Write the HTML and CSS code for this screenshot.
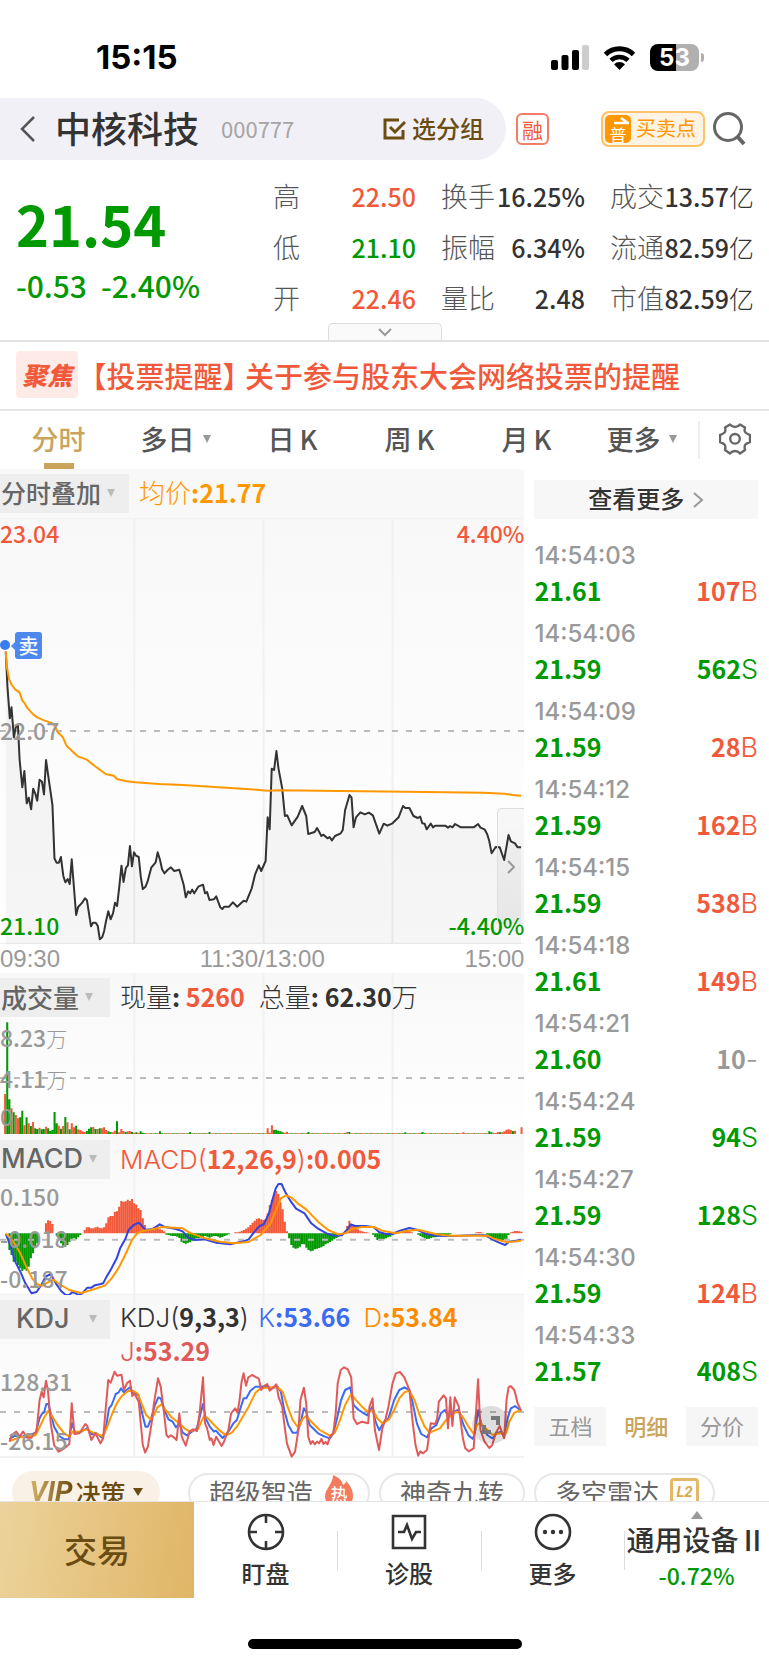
FILE: index.html
```html
<!DOCTYPE html>
<html lang="zh-CN">
<head>
<meta charset="utf-8">
<meta name="viewport" content="width=device-width, initial-scale=1">
<title>中核科技 000777</title>
<link rel="stylesheet" href="styles.css">
</head>
<body>
<header class="status">
  <time class="clock">15:15</time>
  <div class="status-icons">
    <svg width="38" height="25" viewBox="0 0 38 25"><rect x="0" y="15" width="7" height="10" rx="2"/><rect x="10.500" y="10" width="7" height="15" rx="2"/><rect x="21" y="5" width="7" height="20" rx="2"/><rect x="31" y="0" width="7" height="25" rx="2" fill="#cdcdcd"/></svg>
    <svg width="33" height="25" viewBox="0 0 33 25"><path d="M2.500 9.500A20 20 0 0 1 30.500 9.500" fill="none" stroke="#000" stroke-width="5"/><path d="M8 15.300A12.400 12.400 0 0 1 25 15.300" fill="none" stroke="#000" stroke-width="4.600"/><path d="M16.500 25 11 19.300a8 8 0 0 1 11 0Z"/></svg>
    <div class="battery"><span>53</span></div>
  </div>
</header>

<div class="titlebar">
  <div class="title-pill">
    <button class="plain back" aria-label="返回"><svg width="16" height="26" viewBox="0 0 16 26"><path d="M14 1 2 13l12 12" fill="none" stroke="#555" stroke-width="2.500"/></svg></button>
    <h1>中核科技</h1>
    <span class="code">000777</span>
    <button class="plain group"><svg width="23" height="22" viewBox="0 0 23 22"><path d="M16 2H2v18h18v-8" fill="none" stroke="#6b4d12" stroke-width="3"/><path d="m7 9 5 5L22 4" fill="none" stroke="#6b4d12" stroke-width="3"/></svg><span>选分组</span></button>
  </div>
  <span class="margin-tag">融</span>
  <button class="plain trade-points"><span class="pu"><svg width="24" height="9" viewBox="0 0 24 9"><path d="M9 6h14l-7-5" fill="none" stroke="#fff" stroke-width="2.500"/></svg>普</span><span>买卖点</span></button>
  <button class="plain search" aria-label="搜索"><svg width="33" height="34" viewBox="0 0 33 34"><circle cx="15" cy="15" r="13.500" fill="none" stroke="#666" stroke-width="3"/><path d="m24 24 7 8" stroke="#666" stroke-width="4"/></svg></button>
</div>

<section class="quote">
  <div class="price down"><strong>21.54</strong><p><span>-0.53</span><span>-2.40%</span></p></div>
  <dl class="stats">
    <div><dt>高</dt><dd class="up">22.50</dd></div><div><dt>换手</dt><dd>16.25%</dd></div><div><dt>成交</dt><dd>13.57<i>亿</i></dd></div>
    <div><dt>低</dt><dd class="down">21.10</dd></div><div><dt>振幅</dt><dd>6.34%</dd></div><div><dt>流通</dt><dd>82.59<i>亿</i></dd></div>
    <div><dt>开</dt><dd class="up">22.46</dd></div><div><dt>量比</dt><dd>2.48</dd></div><div><dt>市值</dt><dd>82.59<i>亿</i></dd></div>
  </dl>
  <button class="expand" aria-label="展开"><svg width="14" height="9" viewBox="0 0 14 9"><path d="m1 1 6 6 6-6" fill="none" stroke="#999" stroke-width="2"/></svg></button>
</section>

<a class="notice" href="#"><span class="focus">聚焦</span><span class="brackets">【投票提醒】</span><span>关于参与股东大会网络投票的提醒</span></a>

<nav class="tabs">
  <button class="plain active">分时</button><button class="plain">多日<i class="tri"></i></button><button class="plain k-tab">日<span>K</span></button><button class="plain k-tab">周<span>K</span></button><button class="plain k-tab">月<span>K</span></button><button class="plain">更多<i class="tri"></i></button>
  <button class="plain gear" aria-label="设置"><svg width="32" height="32" viewBox="0 0 32 32" fill="none" stroke="#666" stroke-width="2.400" stroke-linejoin="round"><path d="M11 1.500Q13 4 16 4T21 1.500L26 4.500Q25 8 26.500 9.500T31 12V19Q28 20 26.500 21.500T26 27L21 30.500Q19 28 16 28T11 30.500L6 27Q7 23 5.500 21.500T1 19V12Q4 11 5.500 9.500T6 4.500Z"/><circle cx="16" cy="15.800" r="4.800"/></svg></button>
</nav>

<main class="board">
  <div class="charts">
    <section class="panel">
      <div class="panel-head main-head"><button class="picker wide">分时叠加<i class="tri"></i></button><p class="reading orange">均价<b>:21.77</b></p></div>
      <div class="plot plot-main">
        <svg viewBox="0 0 1550 1278" preserveAspectRatio="none">
          <path class="grid" d="M0 1H1550M397 0V1278M779 0V1278M1160 0V1278M0 1277H1550"/>
          <g transform="translate(0 546)">
            <path class="area" id="area"/>
            <path class="dash" d="M0 93H1550"/>
            <polyline class="ink" id="price" points="17,-145 22,-40 29,55 34,22 41,112 47,80 53,75 58,180 66,262 72,213 79,310 85,293 92,328 98,266 104,280 110,302 117,239 124,245 130,283 136,180 145,245 155,315 161,475 167,488 174,488 180,471 187,527 193,547 200,537 206,552 212,478 225,645 231,621 243,608 251,595 257,601 269,679 275,668 283,668 289,678 295,718 302,712 308,692 313,665 320,634 327,658 334,640 340,608 346,618 352,565 359,497 365,546 372,504 378,496 384,438 390,499 396,457 402,467 410,471 416,530 422,567 430,560 436,545 447,503 460,487 466,457 473,480 479,508 486,520 495,510 505,502 515,513 530,509 543,555 549,592 556,574 562,580 568,569 574,580 586,560 600,554 606,580 612,576 619,600 632,598 639,589 651,622 657,627 663,620 677,620 688,607 701,620 720,602 728,605 744,565 754,523 765,496 772,513 785,483 791,352 797,388 803,206 810,210 817,153 823,205 834,265 842,348 849,346 862,376 880,350 893,318 905,348 911,402 930,396 937,384 950,408 956,404 968,415 974,411 981,421 990,408 1007,400 1013,390 1020,330 1033,285 1039,293 1045,382 1052,352 1065,337 1078,343 1090,338 1102,346 1121,401 1134,371 1145,377 1160,370 1178,352 1191,318 1198,324 1210,324 1222,348 1235,354 1242,350 1248,370 1255,371 1261,388 1273,371 1280,382 1286,377 1316,377 1324,383 1330,378 1337,382 1345,372 1362,382 1400,382 1413,372 1420,383 1432,388 1440,403 1446,423 1453,460 1465,441 1477,442 1490,480 1503,405 1510,424 1522,430 1530,442 1540,442"/>
          </g>
          <polyline class="amber" transform="translate(0 -24)" points="17,425 20,470 27,508 35,525 45,538 58,548 66,572 73,580 80,593 98,613 110,622 130,631 148,637 158,642 172,668 186,682 197,708 212,722 230,739 255,748 280,768 312,792 336,797 346,807 370,813 400,817 470,822 540,825 600,829 680,834 740,838 790,842 830,841 1000,843 1200,845 1430,848 1490,851 1515,855 1540,857"/>
        </svg>
        <span class="mark up tl">23.04</span><span class="mark up tr">4.40%</span>
        <span class="mark grey mid">22.07</span>
        <span class="mark down bl">21.10</span><span class="mark down br">-4.40%</span>
        <span class="dot"></span><span class="sell">卖</span>
        <button class="handle" aria-label="收起"><svg width="8" height="14" viewBox="0 0 8 14"><path d="m1 1 6 6-6 6" fill="none" stroke="#999" stroke-width="2"/></svg></button>
      </div>
      <div class="axis"><span>09:30</span><span>11:30/13:00</span><span>15:00</span></div>
    </section>

    <section class="panel shaded volume">
      <svg class="fill" viewBox="0 0 1550 486" preserveAspectRatio="none"><path class="grid" d="M397 0V486M779 0V486M1160 0V486"/><path class="bar-up" id="vol-up"/><path class="bar-down" id="vol-down"/><path class="dash" d="M0 315H1550"/></svg>
      <div class="panel-head"><button class="picker">成交量<i class="tri"></i></button><p class="reading ink-text">现量<b>: </b><b class="up">5260</b><span class="next">总量<b>: 62.30</b>万</span></p></div>
      <span class="mark grey v1">8.23<i>万</i></span><span class="mark grey v2">4.11<i>万</i></span><span class="mark grey v3">0</span>
    </section>

    <section class="panel shaded macd">
      <svg class="fill" viewBox="0 0 1550 480" preserveAspectRatio="none"><path class="grid" d="M397 0V480M779 0V480M1160 0V480M0 479H1550"/><path class="bar-up" id="macd-up"/><path class="bar-down" id="macd-down"/><path class="dash" d="M0 314H1550"/>
        <g transform="translate(0 -15)"><polyline class="blue" points="17,312 30,345 45,395 60,425 75,460 93,490 108,486 122,465 135,440 150,432 165,460 180,482 193,494 205,495 212,487 222,489 232,495 243,490 258,473 270,473 280,466 295,463 305,460 315,440 328,418 345,385 355,355 370,328 380,300 395,285 410,278 418,286 430,300 450,297 462,290 472,283 485,290 520,297 540,304 555,322 575,330 605,328 640,338 680,343 720,334 735,328 750,308 765,290 780,282 795,250 805,210 815,175 823,162 832,162 845,190 860,215 875,236 900,250 920,280 940,296 965,310 985,317 1010,316 1025,300 1037,283 1050,288 1080,288 1105,292 1120,306 1140,312 1160,312 1180,303 1210,294 1235,300 1260,312 1290,317 1340,318 1400,316 1435,316 1455,328 1475,338 1493,345 1505,335 1540,330"/>
        <polyline class="amber" points="17,310 40,335 60,370 80,415 95,445 110,463 125,467 140,458 158,449 175,462 205,480 240,489 270,480 310,467 330,445 350,415 370,375 390,330 405,310 420,303 440,300 480,291 540,295 560,308 600,323 650,335 690,340 735,336 770,315 800,280 820,230 830,205 845,196 860,202 880,220 905,238 940,275 970,300 1000,313 1020,310 1040,297 1070,291 1105,291 1130,302 1170,310 1200,303 1235,299 1260,305 1290,313 1330,317 1400,317 1440,317 1465,328 1500,337 1540,332"/></g></svg>
      <div class="panel-head"><button class="picker latin">MACD<i class="tri"></i></button><p class="reading up">MACD(<b>12,26,9</b>)<b>:0.005</b></p></div>
      <span class="mark grey m1">0.150</span><span class="mark grey m2">-0.018</span><span class="mark grey m3">-0.187</span>
    </section>

    <section class="panel shaded kdj">
      <svg class="fill" viewBox="0 0 1550 489" preserveAspectRatio="none"><path class="grid" d="M397 0V489M779 0V489M1160 0V489M0 487H1550"/><path class="dash" d="M0 351H1550"/>
        <g transform="translate(0 -15)"><polyline class="kblue" points="28,447 45,437 60,441 80,436 105,430 117,385 125,370 130,368 137,342 143,342 150,370 160,410 175,438 190,448 203,448 213,400 222,428 240,425 257,415 272,433 285,430 302,443 312,420 322,355 330,345 342,312 350,308 358,295 366,307 384,292 392,310 400,310 410,318 420,370 430,410 437,410 447,385 458,345 468,322 475,325 488,365 498,388 510,395 520,412 530,400 540,428 552,436 567,425 582,415 600,342 608,385 620,410 632,425 638,422 658,444 675,425 690,400 700,390 712,350 720,325 728,325 740,302 755,290 770,290 790,288 800,295 820,290 830,305 840,360 852,405 865,428 878,428 888,400 898,355 905,365 915,405 925,415 940,430 960,440 975,445 985,430 995,390 1008,330 1020,300 1035,292 1045,345 1060,360 1085,376 1100,350 1110,395 1121,421 1135,395 1148,385 1165,330 1180,300 1195,292 1210,300 1220,340 1232,400 1245,432 1262,442 1275,415 1290,405 1303,370 1315,360 1325,380 1340,365 1355,360 1370,405 1385,437 1398,447 1405,420 1413,360 1422,400 1440,435 1455,445 1468,430 1480,425 1490,440 1500,385 1510,355 1522,348 1540,362"/>
        <polyline class="amber" points="28,453 60,442 105,436 120,405 132,380 143,362 155,380 170,405 190,430 205,440 215,425 235,425 257,418 275,428 303,438 315,415 330,375 345,340 360,318 380,302 395,303 408,312 420,345 432,375 445,388 455,375 465,352 477,343 490,360 505,380 530,400 545,415 560,424 585,418 595,395 603,378 615,385 630,402 650,422 668,436 685,428 700,410 715,385 735,350 755,308 770,295 820,291 835,305 850,350 865,390 882,414 895,385 905,378 920,395 945,420 975,437 990,428 1005,390 1020,345 1038,312 1050,328 1070,350 1090,368 1102,360 1115,385 1130,400 1150,388 1165,360 1180,325 1195,307 1210,302 1225,330 1240,375 1255,410 1270,428 1300,415 1320,388 1345,367 1357,366 1370,385 1385,410 1400,432 1410,405 1420,398 1435,415 1455,434 1480,430 1495,430 1505,395 1520,368 1540,360"/>
        <polyline class="rose" points="28,455 35,435 48,425 58,440 68,425 80,443 93,443 100,430 108,425 117,330 123,305 129,322 136,272 142,305 150,400 160,465 173,485 190,475 205,462 212,340 220,432 235,430 252,402 258,408 270,450 282,430 297,460 305,445 312,360 320,270 327,278 339,245 346,257 359,254 366,300 375,280 384,272 391,318 397,310 410,335 416,400 422,465 429,488 437,470 448,400 455,340 467,265 475,290 485,370 492,435 498,442 505,436 515,443 522,450 530,370 537,440 549,467 560,425 570,418 582,423 590,370 600,262 606,400 612,415 620,450 625,445 631,465 639,440 655,468 662,455 675,420 683,370 695,355 702,368 708,330 714,275 720,250 727,287 734,262 745,255 765,266 772,300 782,287 790,282 797,302 810,290 817,283 823,320 834,350 840,400 848,460 862,500 872,485 882,420 888,330 898,293 905,340 911,440 918,462 924,453 930,463 937,455 943,460 950,447 956,462 962,456 968,463 975,440 985,430 992,370 998,280 1007,240 1017,232 1028,238 1038,262 1045,385 1055,402 1070,395 1088,400 1092,350 1101,325 1108,420 1120,480 1130,415 1140,385 1148,350 1160,280 1170,250 1182,246 1195,262 1210,300 1220,400 1228,465 1236,497 1242,484 1250,490 1262,480 1273,400 1286,402 1292,385 1297,335 1311,316 1318,325 1324,415 1331,322 1337,408 1344,322 1356,350 1368,445 1375,475 1385,484 1400,475 1413,268 1420,420 1432,455 1446,474 1455,465 1465,430 1477,408 1490,445 1497,330 1503,292 1509,288 1520,300 1530,340 1540,362"/></g></svg>
      <div class="panel-head"><button class="picker latin centered">KDJ<i class="tri"></i></button><p class="reading two-line"><span class="ink-text">KDJ(<b>9,3,3</b>)</span> <span class="k">K<b>:53.66</b></span> <span class="d">D<b>:53.84</b></span> <span class="j">J<b>:53.29</b></span></p></div>
      <span class="mark grey k1">128.31</span><span class="mark grey k2">-26.15</span>
      <button class="rotate" aria-label="全屏"><svg width="18" height="18" viewBox="0 0 18 18"><path d="M9 2h7v7M2 9v7h7" fill="none" stroke="#777" stroke-width="4"/></svg></button>
    </section>
  </div>

  <aside class="ticks">
    <button class="see-more"><span>查看更多</span><svg width="11" height="16" viewBox="0 0 11 16"><path d="m1 1 8 7-8 7" fill="none" stroke="#999" stroke-width="2"/></svg></button>
    <ul>
      <li><time>14:54:03</time><b class="down">21.61</b><span class="up"><b>107</b>B</span></li>
      <li><time>14:54:06</time><b class="down">21.59</b><span class="down"><b>562</b>S</span></li>
      <li><time>14:54:09</time><b class="down">21.59</b><span class="up"><b>28</b>B</span></li>
      <li><time>14:54:12</time><b class="down">21.59</b><span class="up"><b>162</b>B</span></li>
      <li><time>14:54:15</time><b class="down">21.59</b><span class="up"><b>538</b>B</span></li>
      <li><time>14:54:18</time><b class="down">21.61</b><span class="up"><b>149</b>B</span></li>
      <li><time>14:54:21</time><b class="down">21.60</b><span class="flat"><b>10</b>-</span></li>
      <li><time>14:54:24</time><b class="down">21.59</b><span class="down"><b>94</b>S</span></li>
      <li><time>14:54:27</time><b class="down">21.59</b><span class="down"><b>128</b>S</span></li>
      <li><time>14:54:30</time><b class="down">21.59</b><span class="up"><b>124</b>B</span></li>
      <li><time>14:54:33</time><b class="down">21.57</b><span class="down"><b>408</b>S</span></li>
    </ul>
    <div class="tick-tabs"><button>五档</button><button class="active">明细</button><button>分价</button></div>
  </aside>
</main>

<div class="chips">
  <button class="vip"><em>VIP</em>决策<i class="tri"></i></button>
  <div class="chip-row">
    <button>超级智造<span class="hot"><svg width="30" height="34" viewBox="0 0 30 34"><path d="M9 0c8 3 9 7 10 10 2-1 3-3 3-4 5 5 7 10 7 15 0 8-6 13-14 13S1 29 1 21C1 14 9 9 9 0Z" fill="#f47b5e"/></svg><span>热</span></span></button>
    <button>神奇九转</button>
    <button>多空雷达<span class="l2"><span>L2</span></span></button>
  </div>
</div>

<footer class="actions">
  <button class="trade"><span>交易</span></button>
  <button><svg width="38" height="38" viewBox="0 0 38 38" fill="none" stroke="#333" stroke-width="2.600"><circle cx="19" cy="19" r="17"/><path d="M19 2v8M19 28v8M2 19h8M28 19h8"/></svg>盯盘</button>
  <button><svg width="38" height="38" viewBox="0 0 38 38" fill="none" stroke="#333" stroke-width="2.600"><path d="M3 3h32v32H3ZM8 19h6l3-7 5 14 4-7h5"/></svg>诊股</button>
  <button><svg width="38" height="38" viewBox="0 0 38 38" fill="none" stroke="#333" stroke-width="2.600"><circle cx="19" cy="19" r="17"/><g fill="#333" stroke="none"><circle cx="11" cy="19" r="2.200"/><circle cx="19" cy="19" r="2.200"/><circle cx="27" cy="19" r="2.200"/></g></svg>更多</button>
  <button class="sector"><i class="caret"></i><span>通用设备Ⅱ</span><b class="down">-0.72%</b></button>
</footer>
<div class="home"><span></span></div>
<script src="app.js"></script>
</body>
</html>
```

FILE: styles.css
```css
:root {
  --num: "Noto Sans CJK SC", Roboto, sans-serif;
  --cjk: "Noto Sans CJK SC", sans-serif;
  --up: #f2593a;
  --down: #009900;
  --grey: #999;
}
* { box-sizing: border-box; }
body, h1, p, dl, dd, ul { margin: 0; padding: 0; }
body { background: #fff; color: #333; font-family: Roboto, var(--cjk); overflow-x: hidden; }
button { border: 0; padding: 0; background: none; color: inherit; font: inherit; }
svg { display: block; }
i { font-style: normal; font-weight: 400; }
ul { list-style: none; }
.plain { display: flex; align-items: center; }
.up { color: var(--up); }
.down { color: var(--down); }
.flat, .grey { color: var(--grey); }
.ink-text { color: #333; }
.tri { width: 0; height: 0; border: 4px solid transparent; border-top: 8px solid #999; border-bottom: 0; }

.status { height: 98px; display: flex; justify-content: space-between; padding: 37px 70px 0 96px; color: #000; }
.clock { font: 700 33px/40px Inter, sans-serif; }
.status-icons { display: flex; gap: 14px; height: 40px; align-items: center; }
.battery { position: relative; width: 49px; height: 27px; border-radius: 8px; background: linear-gradient(90deg, #000 54%, #b0b0b0 54%); color: #fff; text-align: center; font: 700 24px/27px Inter, sans-serif; }
.battery::after { content: ""; position: absolute; left: 51px; top: 9px; width: 3px; height: 9px; border-radius: 0 3px 3px 0; background: #b0b0b0; }

.titlebar { display: flex; align-items: center; height: 62px; padding-right: 23px; }
.title-pill { flex: 0 1 506px; height: 62px; display: flex; align-items: center; padding: 0 22px 0 20px; border-radius: 0 31px 31px 0; background: #f1f0f6; }
.title-pill h1 { margin-left: 19px; padding-bottom: 4px; font: 500 36px/50px var(--cjk); white-space: nowrap; }
.code { margin-left: 22px; padding-bottom: 2px; font: 400 22px/36px var(--num); color: #a5a5a5; }
.group { margin-left: auto; gap: 6px; font: 500 24px/36px var(--cjk); color: #6b4d12; }
.group span, .trade-points > span:last-child, .see-more span, .trade span { padding-bottom: 3px; }
.margin-tag { margin-left: 10px; padding: 0 4px; border: 2px solid #f47b66; border-radius: 6px; font: 400 21px/28px var(--cjk); color: var(--up); }
.trade-points { margin-left: auto; gap: 5px; height: 36px; padding: 0 7px 0 2px; border: 2px solid #ffc266; border-radius: 8px; background: #fff3e3; font: 400 20px/30px var(--cjk); color: #ff9800; }
.pu { width: 26px; height: 28px; padding-top: 2px; border-radius: 5px; background: #ff9800; color: #fff; font: 400 17px/17px var(--cjk); text-align: center; }
.search { margin-left: 8px; }

.quote { position: relative; display: flex; height: 182px; padding: 12px 15px 0 16px; border-bottom: 2px solid #e2e2e2; }
.price { flex: none; width: 257px; padding-top: 17px; font-family: var(--num); }
.price strong { display: block; font-size: 56px; line-height: 68px; font-weight: 700; }
.price p { display: flex; gap: 14px; margin-top: 8px; font-size: 30px; line-height: 40px; font-weight: 500; }
.stats { flex: 1; display: grid; grid-template-columns: 143px 144px 1fr; column-gap: 25px; grid-auto-rows: 51px; }
.stats div { display: flex; justify-content: space-between; align-items: center; padding-bottom: 3px; white-space: nowrap; }
.stats dt { font: 300 27px/40px var(--cjk); color: #555; }
.stats dd { font: 500 25px/40px var(--num); }
.stats dd i { font: 300 25px/40px var(--cjk); }
.expand { position: absolute; left: 50%; bottom: 0; width: 114px; height: 17px; margin-left: -57px; display: grid; place-items: center; border: 1px solid #ddd; border-bottom: 0; border-radius: 5px 5px 0 0; background: #fafafa; }

.notice { display: flex; align-items: center; height: 69px; padding: 0 0 2px 16px; border-bottom: 2px solid #e5e5e5; color: var(--up); text-decoration: none; font: 500 29px/40px var(--cjk); white-space: nowrap; }
.focus { width: 62px; margin-right: 14px; border-radius: 4px; background: #feebe7; font: italic 900 25px/47px var(--cjk); text-align: center; }
.brackets { margin-right: 8px; font-feature-settings: "halt"; }

.tabs { display: grid; grid-template-columns: repeat(5, 117px) 1fr 71px; height: 58px; font: 500 27px/40px var(--cjk); color: #555; }
.tabs button { position: relative; justify-content: center; gap: 8px; padding-bottom: 2px; }
.tabs .k-tab { gap: 5px; }
.tabs .active { color: #caa35c; }
.tabs .active::after { content: ""; position: absolute; left: 50%; bottom: 0; width: 30px; height: 6px; margin-left: -15px; background: #caa35c; }
.tabs .gear { margin: 10px 0; border-left: 2px solid #eee; }

.board { display: flex; align-items: stretch; }
.charts { flex: 0 0 68.2%; }
.panel { position: relative; }
.panel-head { position: relative; display: flex; padding-top: 5px; gap: 10px; }
.main-head { height: 49px; background: #f8f8f8; }
.picker { flex: none; width: 110px; height: 39px; display: flex; align-items: center; gap: 6px; padding: 0 0 2px 1px; background: #eee; color: #666; font: 500 26px/37px var(--cjk); white-space: nowrap; }
.picker .tri { border-top-color: #bbb; }
.picker.wide { width: 129px; font-size: 25px; }
.picker.latin { font: 500 27px/37px Inter, sans-serif; }
.picker.centered { padding-left: 16px; gap: 19px; }
.reading { font: 300 26px/37px Inter, var(--cjk); white-space: nowrap; }
.reading b { font: 700 25px/37px var(--num); white-space: pre; }
.reading .next { margin-left: 14px; }
.orange { color: #ff9800; }
.plot { position: relative; }
.plot-main { height: 426px; background: linear-gradient(#f8f8f8, #fff); }
.plot-main > svg, .fill { position: absolute; inset: 0; width: 100%; height: 100%; overflow: hidden; }
.plot path, .plot polyline, .fill path, .fill polyline { vector-effect: non-scaling-stroke; fill: none; stroke-width: 2; stroke-linejoin: round; }
.panel svg .grid { stroke: #f1f1f1; }
.panel svg .dash { stroke: #bbb; stroke-dasharray: 6 8; }
.panel svg .area { fill: rgba(0, 0, 0, 0.035); stroke: none; }
.panel svg .ink { stroke: #333; }
.panel svg .amber { stroke: #ff9800; }
.panel svg .blue { stroke: #3344dd; }
.panel svg .kblue { stroke: #3b6bf0; }
.panel svg .rose { stroke: #e05a5a; }
.panel svg .bar-up { fill: #f2593a; stroke: none; }
.panel svg .bar-down { fill: #009900; stroke: none; }
.mark { position: absolute; left: 0; font: 500 23px/30px var(--num); }
.mark i { font: 300 21px/30px var(--cjk); }
.tl { top: 0; }
.tr { top: 0; left: auto; right: 0; }
.mid { top: 197px; }
.bl { bottom: 4px; }
.br { bottom: 4px; left: auto; right: 0; }
.dot { position: absolute; left: 0; top: 122px; width: 10px; height: 10px; border-radius: 50%; background: #3a7df0; }
.sell { position: absolute; left: 15px; top: 114px; width: 27px; border-radius: 3px; background: #4d88ee; color: #fff; font: 500 20px/27px var(--cjk); text-align: center; }
.sell::before { content: ""; position: absolute; left: -4px; top: 10px; border: 4px solid transparent; border-right-color: #4d88ee; border-left: 0; }
.handle { position: absolute; right: 0; bottom: 20px; width: 27px; height: 116px; display: grid; place-items: center; border: 1px solid #ddd; border-right: 0; border-bottom: 0; border-radius: 5px 0 0 0; background: linear-gradient(rgba(0, 0, 0, 0.02), rgba(0, 0, 0, 0.06)); }
.axis { display: flex; justify-content: space-between; height: 29px; font: 400 24px/29px "Liberation Sans", sans-serif; color: #999; }
.shaded { background: linear-gradient(#f8f8f8, #fff); }
.volume { height: 162px; }
.macd { height: 160px; }
.kdj { height: 163px; }
.v1 { top: 49px; }
.v2 { top: 90px; }
.v3 { top: 128px; }
.m1 { top: 46px; }
.m2 { top: 88px; }
.m3 { top: 128px; }
.k1 { top: 71px; }
.k2 { top: 130px; }
.two-line { flex: 1; }
.two-line, .two-line b { line-height: 32px; }
.two-line .k { margin: 0 6px 0 2px; color: #3b6bf0; }
.two-line .d { color: #ff8c00; }
.two-line .j { display: block; color: #e05a5a; }
.rotate { position: absolute; right: 14px; bottom: 14px; width: 38px; height: 38px; display: grid; place-items: center; border-radius: 50%; background: rgba(0, 0, 0, 0.12); }

.ticks { flex: 1; padding: 11px 11px 0 10px; display: flex; flex-direction: column; }
.see-more { height: 39px; display: flex; align-items: center; justify-content: center; gap: 9px; background: #f7f7f7; font: 500 24px/36px var(--cjk); }
.ticks ul { margin-top: 19px; }
.ticks li { display: flex; flex-wrap: wrap; justify-content: space-between; align-content: flex-start; height: 78px; }
.ticks li time { flex: 0 0 100%; font: 500 24px/36px Inter, sans-serif; color: #999; }
.ticks li b { font: 700 25px/32px var(--num); }
.ticks li span { font: 300 27px/32px Inter, sans-serif; }
.tick-tabs { display: grid; grid-template-columns: 72px 1fr 72px; margin-top: 11px; font: 400 22px/36px var(--cjk); color: #999; }
.tick-tabs button { height: 39px; padding-bottom: 3px; background: #f6f6f6; }
.tick-tabs .active { background: none; color: #caa35c; font-weight: 500; }

.chips { display: flex; gap: 28px; height: 43px; padding: 13px 0 0 12px; overflow: hidden; }
.vip { flex: none; width: 148px; height: 42px; display: flex; align-items: center; justify-content: center; border-radius: 21px; background: #f9f1e5; color: #6b4d12; font: 500 25px/38px var(--cjk); }
.vip em { margin-right: 3px; font: italic 700 28px/38px Roboto, sans-serif; background: linear-gradient(90deg, #d9b36a, #6b4d12); -webkit-background-clip: text; background-clip: text; color: transparent; }
.vip .tri { margin-left: 7px; border-width: 8px 5px 0; border-top-color: #6b4d12; }
.chip-row { display: flex; gap: 9px; padding-top: 2px; }
.chip-row button { height: 40px; display: flex; align-items: center; gap: 11px; padding: 0 19px 3px; border: 2px solid #e8e8e8; border-radius: 20px; color: #666; font: 400 26px/33px var(--cjk); white-space: nowrap; }
.chip-row button:first-child, .chip-row button:last-child { padding-right: 14px; }
.hot { position: relative; }
.hot span { position: absolute; inset: 8px 0 0; color: #fff; font: 500 17px/22px var(--cjk); text-align: center; }
.l2 { width: 29px; height: 28px; border: 3px solid #e3b866; border-radius: 4px; font: italic 700 15px/22px Roboto, sans-serif; color: #d9a94f; text-align: center; }

.actions { position: relative; display: grid; grid-template-columns: 194px 143px 144px 143px 1fr; height: 97px; background: #fff; border-top: 1px solid #e5e5e5; font: 500 24px/34px var(--cjk); }
.actions button { position: relative; display: flex; flex-direction: column; align-items: center; gap: 5px; padding-top: 11px; white-space: nowrap; }
.actions button + button + button::before { content: ""; position: absolute; left: 0; top: 29px; width: 1px; height: 39px; background: #ddd; }
.actions .trade { justify-content: center; padding: 0; background: linear-gradient(100deg, #ecd39b, #e0b566); color: #6b4d12; font-size: 33px; }
.actions .sector { gap: 0; padding-top: 9px; }
.caret { border: 6px solid transparent; border-bottom: 8px solid #999; border-top: 0; }
.sector span { font-size: 28px; line-height: 40px; }
.sector b { font: 500 23px/32px var(--num); }
.home { padding: 41px 0 16px; }
.home span { display: block; width: 274px; height: 10px; margin: 0 auto; border-radius: 5px; background: #000; }
```

FILE: app.js
```js
// Positive values are rising bars, negative values falling ones.
var STEP = 6.36;
var START = 12;

function spread(segments) {
  var out = new Array(241).fill(0);
  Object.keys(segments).forEach(function (at) {
    segments[at].forEach(function (v, i) { out[+at + i] = v; });
  });
  return out;
}

function bars(values, base, width, signed, sign) {
  return values.map(function (v, i) {
    if (v * sign <= 0) return "";
    var x = START + i * STEP;
    var tip = signed ? base - v : base - Math.abs(v);
    return "M" + x + " " + base + "V" + tip + "h" + width + "V" + base + "Z";
  }).join("");
}

var volume = spread({
  0: [120, -335, -104, 77, -65, 57, 47, -50, -70, 26, -50, 32, -24, 36, -17, -15, 19, -14, -15, 22, -17, -9, -13, -66, -32, 25, -16, 24, -51, 35, -14, 32, 20, -25, 14, 12, 8, 6, -9, -16, -20, 21, -15, 15, -17, 17, 20, 12, -8, -6, 5, 10, -38, 5, 15, 9, -6, 8, 9, -6, 4, -5, 4, -8, -4],
  122: [17, 4, 26, -12, -13, -10, -8, -5, 4, 7],
  225: [-8, -5, 4, 3, 6, -5, 5, 8, 13, 14, 12, -9, 10, 0, 0, 20]
});
volume = volume.map(function (v, i) {
  if (v || i > 237) return v;
  var tall = { 72: -8, 86: -6, 95: -6, 141: -6, 159: 6, 160: -6, 186: -5, 194: -6, 213: 5 };
  return tall[i] || ((i * 7 % 5 < 2 ? -1 : 1) * (2 + i * 3 % 3));
});

var macd = spread({
  2: [-50, -65, -85, -85, -95, -105, -113, -108, -112, -100, -75, -60, -45, -30],
  19: [30, 39, 37, 28],
  24: [-8, -20, -30, -40, -40, -35, -25, -20, -15, -18, -12, -5],
  37: [10, 18, 18, 15, 15, 18, 20, 16, 15, 18, 30, 48, 52, 52, 65, 66, 80, 97, 95, 96, 101, 97, 103, 90, 86, 75, 70, 45, 25, 14, 10, 10, 12, 14, 14, 12, 10, 6],
  75: [-4, -5, -7, -8, -8, -10, -14, -25, -29, -31, -28, -27, -22, -18, -15, -15, -12, -10, -8, -10, -13, -10, -8, -8, -10, -13, -11, -8, -6, -3],
  107: [3, 3, 5, 8, 10, 14, 18, 25, 32, 38, 44, 45, 42, 40, 42, 60, 85, 100, 115, 127, 118, 93, 72, 35, 6],
  132: [-15, -35, -43, -46, -45, -40, -32, -33, -43, -50, -54, -52, -48, -46, -44, -42, -38, -33, -30, -26, -22, -18, -14, -10, -8, -5],
  158: [6, 22, 38, 28, 25, 18, 12, 8, 6, 4, 3, 2],
  171: [-4, -12, -20, -22, -20, -18, -15, -12, -10, -6, -3],
  185: [4, 6, 7, 6, 3],
  192: [-4, -8, -12, -15, -17, -16, -14, -12, -12, -10, -9, -8, -7, -6, -4, -3],
  219: [3, 4, 4, 2],
  224: [-4, -8, -12, -14, -16, -18, -19, -20, -20, -19, -5],
  235: [3, 5, 7, 7, 6, 5]
});

function draw(id, d) { document.getElementById(id).setAttribute("d", d); }
draw("vol-up", bars(volume, 483, 6, false, 1));
draw("vol-down", bars(volume, 483, 6, false, -1));
draw("macd-up", bars(macd, 295, 6, true, 1));
draw("macd-down", bars(macd, 295, 6, true, -1));
draw("area", "M17 732L" + document.getElementById("price").getAttribute("points") + " 1540,732Z");
```
